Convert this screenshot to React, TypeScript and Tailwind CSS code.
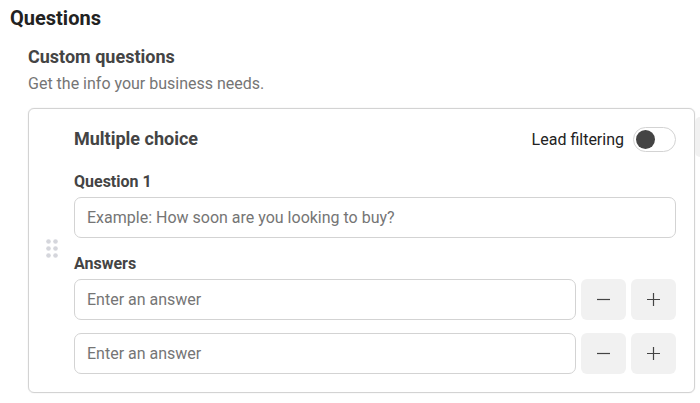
import { useState } from "react";

const inputClass =
  "block h-[41px] w-full min-w-0 flex-1 rounded-[7px] border border-[#d3d3d3] bg-white px-3 text-base text-[#333] outline-none placeholder:text-[#757575] placeholder:opacity-100";

function StepButton({ kind, disabled, onClick }: { kind: "remove" | "add"; disabled?: boolean; onClick: () => void }) {
  return (
    <button
      type="button"
      aria-label={kind === "add" ? "Add answer" : "Remove answer"}
      disabled={disabled}
      onClick={onClick}
      className="flex h-[41px] w-[45px] shrink-0 items-center justify-center rounded-md bg-[#f1f1f1] text-[#444]"
    >
      <svg width="13" height="13" viewBox="0 0 13 13" stroke="currentColor" strokeWidth="1.2" aria-hidden="true">
        <path d={kind === "add" ? "M0 6.5h13M6.5 0v13" : "M0 6.5h13"} />
      </svg>
    </button>
  );
}

function DragHandle() {
  return (
    <svg width="12" height="19" viewBox="0 0 12 19" fill="#d5d6dc" aria-hidden="true">
      {[2.5, 9.5, 16.5].map((y) => (
        <g key={y}>
          <circle cx="2.5" cy={y} r="2.3" />
          <circle cx="9.5" cy={y} r="2.3" />
        </g>
      ))}
    </svg>
  );
}

export default function App() {
  const [filtering, setFiltering] = useState(false);
  const [answers, setAnswers] = useState([0, 1]);

  return (
    <main className="bg-white pt-1.5 pb-2.5 pl-2.5 font-['Roboto',sans-serif] text-[#444]">
      <h1 className="text-xl leading-6 font-bold text-[#222]">Questions</h1>
      <section className="mt-[15px] pl-[18px]">
        <h2 className="text-lg leading-6 font-bold">Custom questions</h2>
        <p className="mt-[3px] text-base leading-6 text-[#757575]">Get the info your business needs.</p>

        <div className="mt-3 flex items-start">
          <div className="flex min-w-0 flex-1 rounded-md border border-[#d3d3d3] shadow-[0_0_1px_#ccc]">
            <div className="flex w-[45px] shrink-0 items-center justify-center pb-1">
              <DragHandle />
            </div>
            <div className="min-w-0 flex-1 pt-[18px] pr-[18px] pb-[18px]">
              <div className="flex items-start justify-between">
                <h3 className="text-lg leading-6 font-bold">Multiple choice</h3>
                <label className="flex items-center gap-[9px] text-base leading-6 text-[#222]">
                  Lead filtering
                  <span className="flex h-[25px] w-[43px] items-center rounded-full border border-[#d3d3d3] bg-white px-0.5 has-checked:justify-end">
                    <input
                      type="checkbox"
                      role="switch"
                      checked={filtering}
                      onChange={(e) => setFiltering(e.target.checked)}
                      className="size-[19px] appearance-none rounded-full bg-[#444]"
                    />
                  </span>
                </label>
              </div>

              <label htmlFor="question" className="mt-5 block text-base leading-5 font-bold">
                Question 1
              </label>
              <div className="mt-[5px] flex">
                <input
                  id="question"
                  type="text"
                  placeholder="Example: How soon are you looking to buy?"
                  className={inputClass}
                />
              </div>

              <h4 className="mt-4 text-base leading-5 font-bold">Answers</h4>
              <div className="mt-[5px] flex flex-col gap-[13px]">
                {answers.map((id, i) => (
                  <div key={id} className="flex gap-[5px]">
                    <input
                      type="text"
                      aria-label={`Answer ${i + 1}`}
                      placeholder="Enter an answer"
                      className={inputClass}
                    />
                    <StepButton
                      kind="remove"
                      disabled={answers.length === 1}
                      onClick={() => setAnswers(answers.filter((a) => a !== id))}
                    />
                    <StepButton kind="add" onClick={() => setAnswers([...answers, Math.max(...answers) + 1])} />
                  </div>
                ))}
              </div>
            </div>
          </div>
          <div className="mt-[9px] h-10 w-[5px] shrink-0 rounded-l-md bg-[#f1f1f1]" />
        </div>
      </section>
    </main>
  );
}
